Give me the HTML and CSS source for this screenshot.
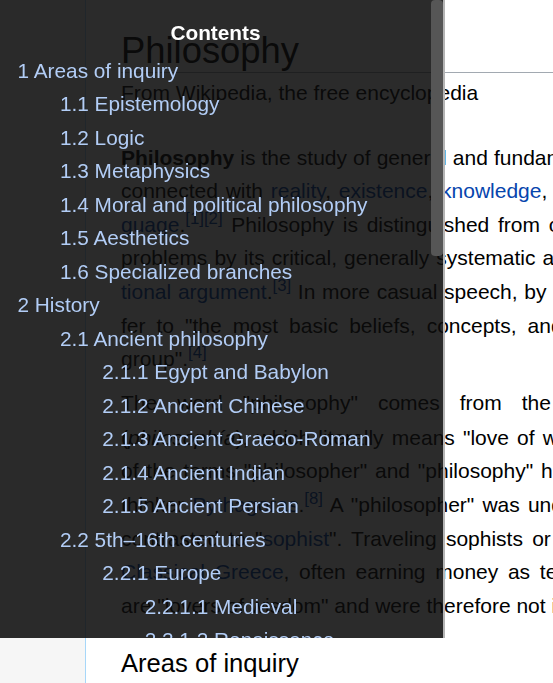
FILE: index.html
```html
<!DOCTYPE html>
<html lang="en">
<head>
<meta charset="utf-8">
<title>Philosophy - Wikipedia</title>
<link rel="stylesheet" href="styles.css">
</head>
<body>
<div class="page">
  <div class="sidebar"></div>
  <main class="content">
    <h1 class="title">Philosophy</h1>
    <div class="tagline">From Wikipedia, the free encyclopedia</div>
    <p><b>Philosophy</b> is the study of general and fundamental problems, such as those connected with <a href="#">reality</a>, <a href="#">existence</a>, <a href="#">knowledge</a>, <a href="#">values</a>, <a href="#">reason</a>, <a href="#">mind</a>, and <a href="#">lan&shy;guage</a>.<sup><a href="#">[1]</a><a href="#">[2]</a></sup> Philosophy is distinguished from other ways of addressing such problems by its critical, generally systematic approach and its reliance on <a href="#">ra&shy;tional argument</a>.<sup><a href="#">[3]</a></sup> In more casual speech, by extension, "philosophy" can re&shy;fer to "the most basic beliefs, concepts, and attitudes of an individual or group".<sup><a href="#">[4]</a></sup></p>
    <p>The word "philosophy" comes from the <a href="#">Ancient Greek</a> <span class="grc" lang="grc">φιλοσοφία</span> (<i>philosophía</i>), which literally means "love of wisdom".<sup><a href="#">[5]</a><a href="#">[6]</a><a href="#">[7]</a></sup> The introduction of the terms "philosopher" and "philosophy" has been ascribed to the Greek thinker <a href="#">Pythagoras</a>.<sup><a href="#">[8]</a></sup> A "philosopher" was understood as a word which was contrasted to "<a href="#">sophist</a>". Traveling sophists or "wise men" were important in <a href="#">Classical Greece</a>, often earning money as teachers, whereas philosophers are "lovers of wisdom" and were therefore not in it for the money.</p>
    <h2 class="section-heading">Areas of inquiry</h2>
  </main>
</div>

<nav class="toc">
  <div class="toc-body">
    <h2 class="toc-title">Contents</h2>
    <ul>
      <li><a href="#">1 Areas of inquiry</a>
        <ul>
          <li><a href="#">1.1 Epistemology</a></li>
          <li><a href="#">1.2 Logic</a></li>
          <li><a href="#">1.3 Metaphysics</a></li>
          <li><a href="#">1.4 Moral and political philosophy</a></li>
          <li><a href="#">1.5 Aesthetics</a></li>
          <li><a href="#">1.6 Specialized branches</a></li>
        </ul>
      </li>
      <li><a href="#">2 History</a>
        <ul>
          <li><a href="#">2.1 Ancient philosophy</a>
            <ul>
              <li><a href="#">2.1.1 Egypt and Babylon</a></li>
              <li><a href="#">2.1.2 Ancient Chinese</a></li>
              <li><a href="#">2.1.3 Ancient Graeco-Roman</a></li>
              <li><a href="#">2.1.4 Ancient Indian</a></li>
              <li><a href="#">2.1.5 Ancient Persian</a></li>
            </ul>
          </li>
          <li><a href="#">2.2 5th–16th centuries</a>
            <ul>
              <li><a href="#">2.2.1 Europe</a>
                <ul>
                  <li><a href="#">2.2.1.1 Medieval</a></li>
                  <li><a href="#">2.2.1.2 Renaissance</a></li>
                </ul>
              </li>
              <li><a href="#">2.2.2 East Asia</a></li>
              <li><a href="#">2.2.3 India</a></li>
              <li><a href="#">2.2.4 Middle East</a></li>
            </ul>
          </li>
          <li><a href="#">2.3 17th–20th centuries</a>
            <ul>
              <li><a href="#">2.3.1 Early modern philosophy</a></li>
              <li><a href="#">2.3.2 19th-century philosophy</a></li>
              <li><a href="#">2.3.3 20th-century philosophy</a></li>
            </ul>
          </li>
        </ul>
      </li>
      <li><a href="#">3 Major traditions</a>
        <ul>
          <li><a href="#">3.1 German idealism</a></li>
          <li><a href="#">3.2 Pragmatism</a></li>
          <li><a href="#">3.3 Phenomenology</a></li>
          <li><a href="#">3.4 Existentialism</a></li>
          <li><a href="#">3.5 Structuralism and post-structuralism</a></li>
          <li><a href="#">3.6 The analytic tradition</a></li>
        </ul>
      </li>
      <li><a href="#">4 Applied philosophy</a></li>
      <li><a href="#">5 See also</a></li>
      <li><a href="#">6 References</a></li>
      <li><a href="#">7 Further reading</a></li>
      <li><a href="#">8 External links</a></li>
    </ul>
  </div>
  <div class="toc-scrollbar" aria-hidden="true"><div class="toc-thumb"></div></div>
</nav>
</body>
</html>
```

FILE: styles.css
```css
html {
  overflow: hidden;
}

body {
  margin: 0;
  font-family: "Liberation Sans", Arial, sans-serif;
  background: #fff;
  color: #000;
}

.page {
  display: flex;
  align-items: stretch;
  min-height: 683px;
}

.sidebar {
  flex: 0 0 85px;
  background: #f6f6f6;
}

.content {
  flex: 0 0 auto;
  width: 723px;
  padding: 0 35px 40px;
  border-left: 1px solid #a7d7f9;
  font-size: 21px;
  line-height: 33.6px;
}

.title {
  margin: 0;
  padding: 30px 0 1px;
  font-size: 36.4px;
  font-weight: normal;
  line-height: 41px;
  border-bottom: 1px solid #a2a9b1;
}

.tagline {
  margin: 3px 0 31px;
}

.content p {
  margin: 10.5px 0;
  text-align: justify;
}

.content a {
  color: #0645ad;
  text-decoration: none;
}

.content sup {
  font-size: 80%;
  line-height: 1;
  vertical-align: super;
}

.grc {
  font-family: "DejaVu Sans", sans-serif;
}

.section-heading {
  margin: 25px 0 0;
  font-size: 25.6px;
  font-weight: normal;
  line-height: 1.3;
}

/* Table of contents overlay */
.toc {
  position: fixed;
  top: 0;
  left: 0;
  display: flex;
  width: 445px;
  height: 638px;
  box-sizing: border-box;
  border-right: 2px solid #b4b4b4;
  background: rgba(12, 12, 12, 0.87);
  font-size: 20.8px;
  line-height: 33.5px;
}

.toc-body {
  flex: 1 1 auto;
  min-width: 0;
  overflow: hidden;
  padding-top: 16px;
}

.toc-scrollbar {
  flex: 0 0 12px;
}

.toc-thumb {
  height: 256px;
  background: #565656;
  border-radius: 4px;
}

.toc-title {
  margin: 0 0 4px;
  text-align: center;
  font-size: inherit;
  font-weight: bold;
  color: #fff;
}

.toc ul {
  list-style: none;
  margin: 0;
  padding-left: 42.4px;
}

.toc-body > ul {
  padding-left: 17.5px;
}

.toc a {
  color: #b2cdf6;
  text-decoration: none;
}
```
